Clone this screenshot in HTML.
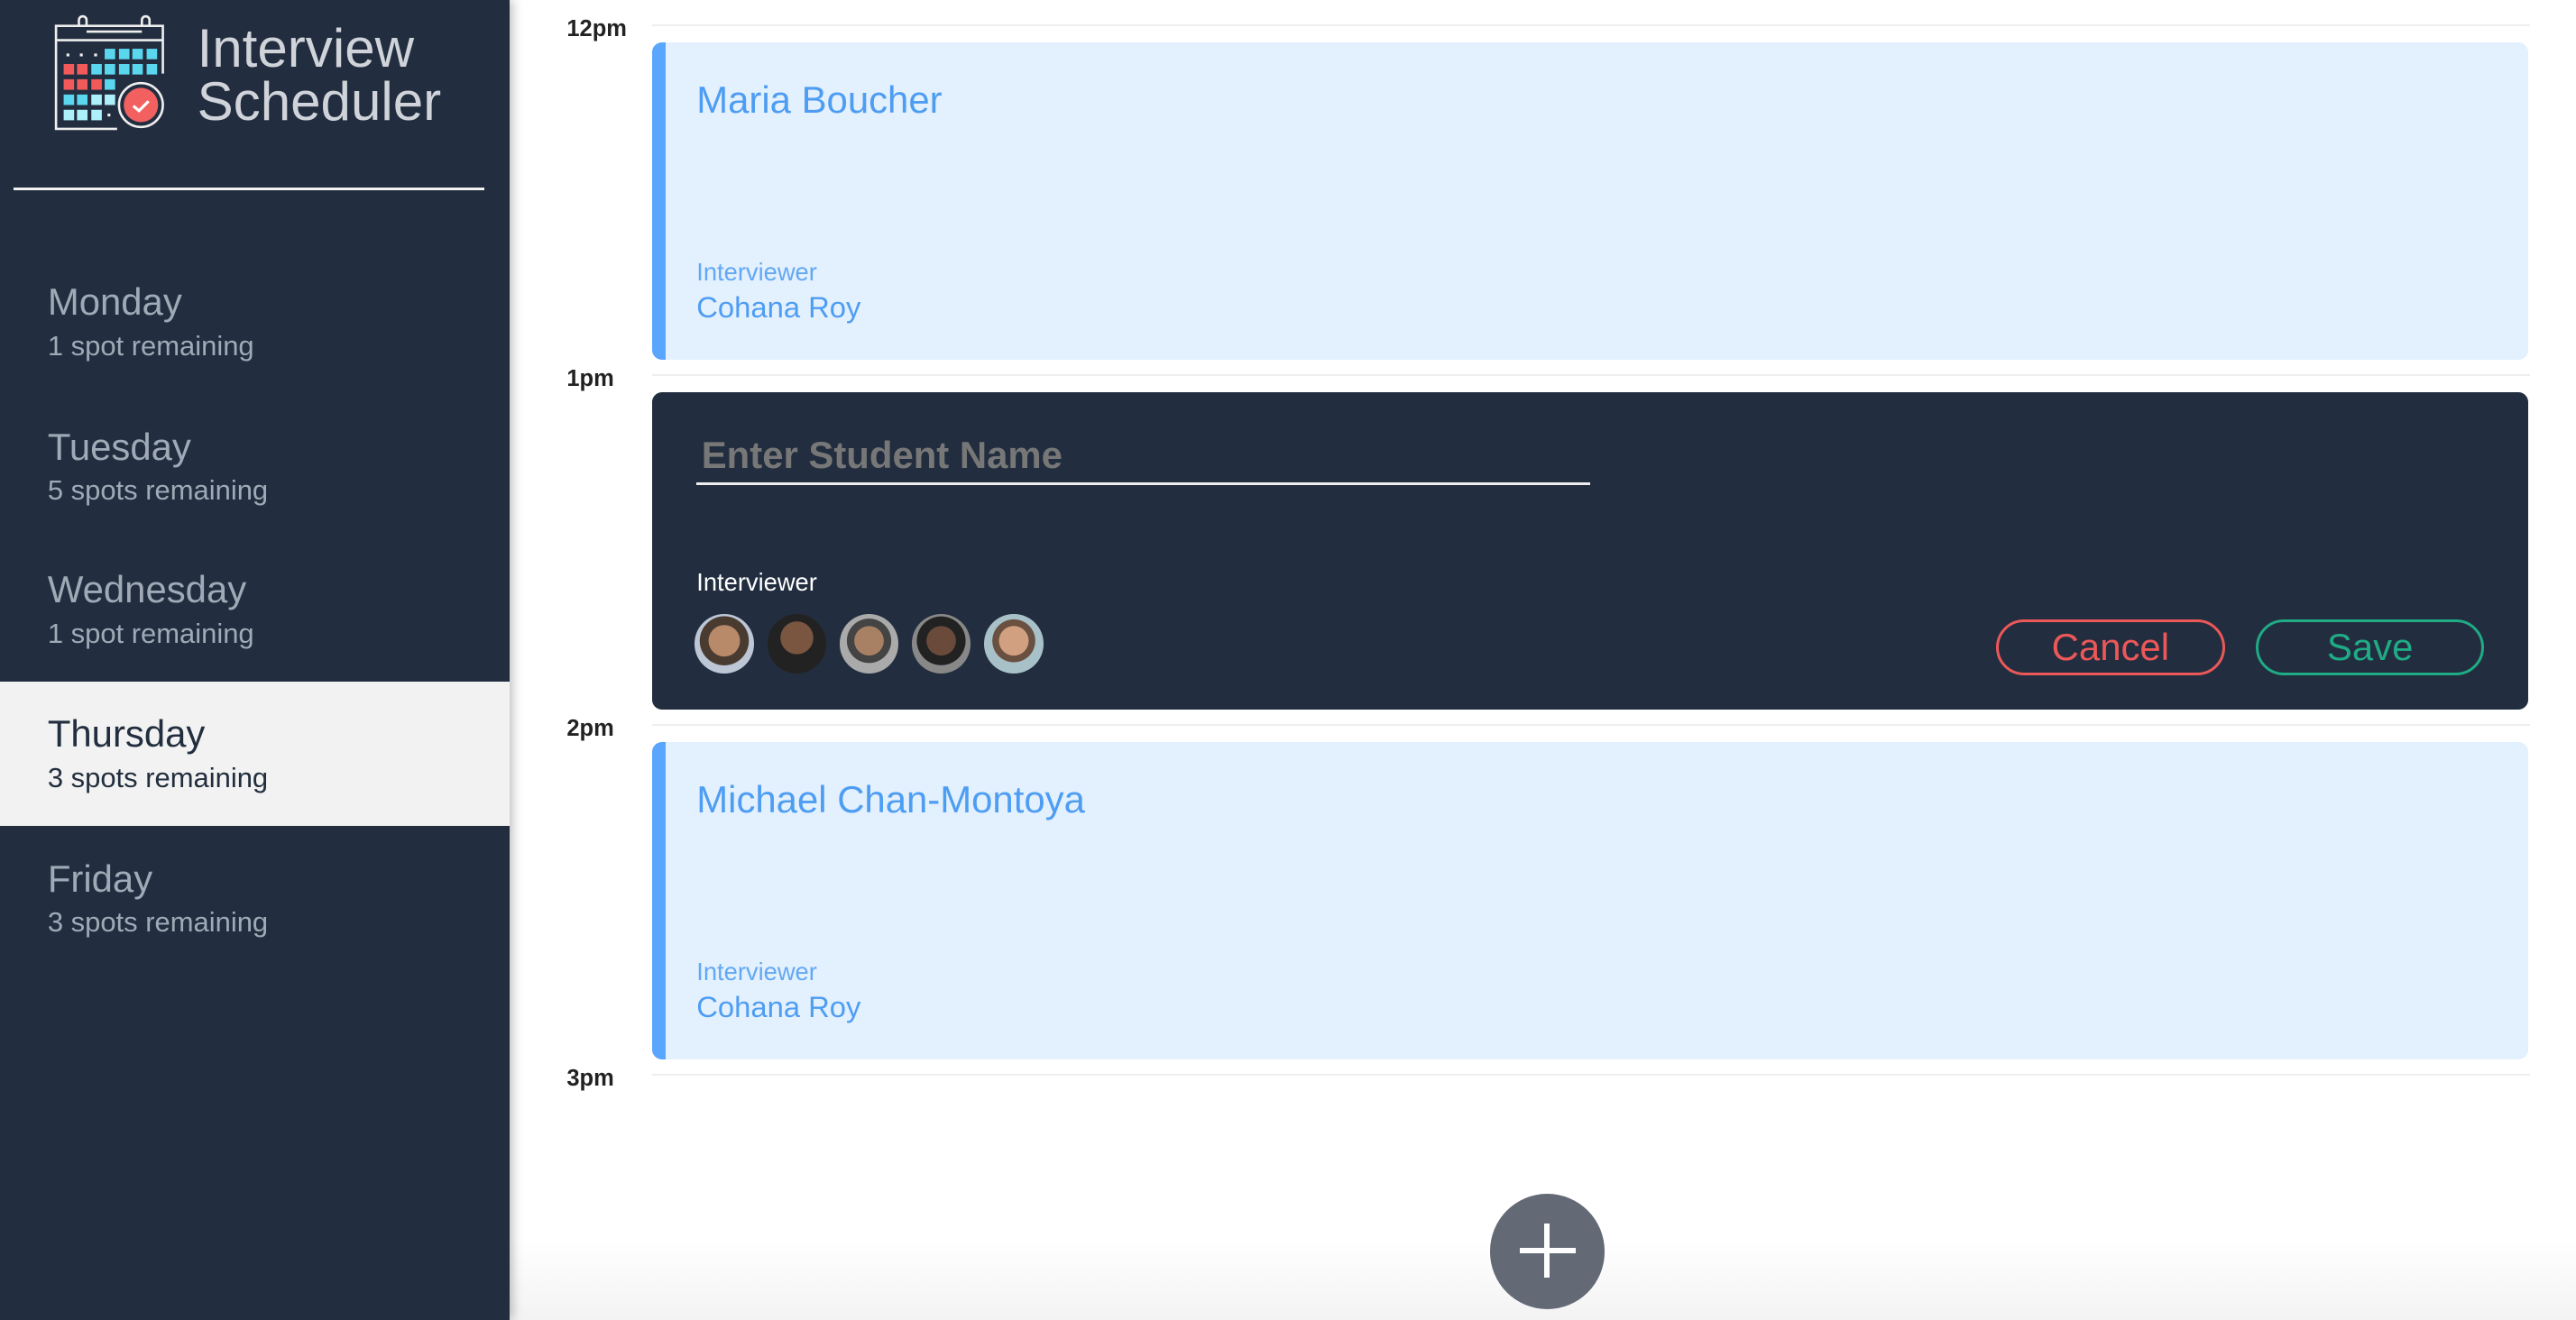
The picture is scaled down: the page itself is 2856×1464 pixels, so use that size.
<!DOCTYPE html>
<html><head><meta charset="utf-8"><style>
html,body{margin:0;padding:0;width:2856px;height:1464px;overflow:hidden;background:#fff}
#w{zoom:1.8214;width:1568px;height:804px;position:relative;font-family:"Liberation Sans",sans-serif;background:linear-gradient(#fff 0,#fff 755px,#f3f3f3 804px)}
.a{position:absolute;white-space:nowrap}
#side{position:absolute;left:0;top:0;width:310px;height:804px;background:#222e3f;box-shadow:2px 0 6px rgba(0,0,0,.25)}
.day{position:absolute;left:0;width:310px;height:88px}
.day .n{position:absolute;left:29px;top:19px;font-size:23px;color:#a0aab7}
.day .s{position:absolute;left:29px;top:49px;font-size:17px;color:#a0aab7;font-weight:300}
.day.sel{background:#f2f2f2}
.day.sel .n,.day.sel .s{color:#222e3f}
.t{position:absolute;left:345px;font-size:14px;font-weight:bold;color:#222}
.ln{position:absolute;left:397px;width:1143px;height:1px;background:#eee}
.card{position:absolute;left:397px;width:1142px;height:193px;background:#e3f0fd;border-radius:6px;overflow:hidden}
.card:before{content:"";position:absolute;left:0;top:0;bottom:0;width:8px;background:#5aa6fc}
.card .nm{position:absolute;left:27px;top:22px;font-size:23px;color:#4d9df3}
.card .iv{position:absolute;left:27px;top:131px;font-size:15px;color:#63a8f4}
.card .ir{position:absolute;left:27px;top:151px;font-size:18px;color:#4d9df3}
.av{position:absolute;top:374px;width:36px;height:36px;border-radius:50%}
.btn{position:absolute;top:377px;width:136px;height:31px;border-radius:18px;font-size:23px;text-align:center;line-height:31px}
</style></head><body><div id="w">
<div id="side">
<svg class="a" style="left:30px;top:9px" width="74" height="72" viewBox="50 18 118 124">
<g fill="none" stroke="#eee" stroke-width="2.5">
<path d="M116 138H52V30H164V80"/><path d="M52 45H164"/><path d="M76 30V24a4 4 0 0 1 8 0V30M142 30V24a4 4 0 0 1 8 0V30"/><path d="M84 36H142"/>
<circle cx="141" cy="113" r="23"/></g>
<circle cx="141" cy="113" r="18" fill="#f26060"/>
<path d="M133 114l6 5 10-10" fill="none" stroke="#fff" stroke-width="3"/>
<g fill="#eee"><rect x="63" y="59" width="3" height="3"/><rect x="77" y="59" width="3" height="3"/><rect x="92" y="59" width="3" height="3"/><rect x="106" y="122" width="3" height="3"/></g>
<g fill="#5ad6ef"><rect x="103" y="54" width="11" height="11"/><rect x="118" y="54" width="11" height="11"/><rect x="132" y="54" width="11" height="11"/><rect x="147" y="54" width="11" height="11"/>
<rect x="89" y="70" width="11" height="11"/><rect x="103" y="70" width="11" height="11"/><rect x="118" y="70" width="11" height="11"/><rect x="132" y="70" width="11" height="11"/><rect x="147" y="70" width="11" height="11"/>
<rect x="103" y="86" width="11" height="11"/><rect x="60" y="102" width="11" height="11"/><rect x="74" y="102" width="11" height="11"/></g>
<g fill="#f25a5a"><rect x="60" y="70" width="11" height="11"/><rect x="74" y="70" width="11" height="11"/><rect x="60" y="86" width="11" height="11"/><rect x="74" y="86" width="11" height="11"/><rect x="89" y="86" width="11" height="11"/></g>
<g fill="#aef0fa"><rect x="89" y="102" width="11" height="11"/><rect x="103" y="102" width="11" height="11"/><rect x="60" y="118" width="11" height="11"/><rect x="74" y="118" width="11" height="11"/><rect x="89" y="118" width="11" height="11"/></g>
</svg>
<div class="a" style="left:120px;top:14px;font-size:33px;line-height:32px;color:#d0d4da;font-weight:300">Interview<br>Scheduler</div>
<div class="a" style="left:8px;top:114px;width:287px;height:2px;background:#f2f2f2"></div>
<div class="day" style="top:152px"><div class="n">Monday</div><div class="s">1 spot remaining</div></div>
<div class="day" style="top:240px"><div class="n">Tuesday</div><div class="s">5 spots remaining</div></div>
<div class="day" style="top:327px"><div class="n">Wednesday</div><div class="s">1 spot remaining</div></div>
<div class="day sel" style="top:415px"><div class="n">Thursday</div><div class="s">3 spots remaining</div></div>
<div class="day" style="top:503px"><div class="n">Friday</div><div class="s">3 spots remaining</div></div>
</div>
<div class="ln" style="top:15px"></div><div class="t" style="top:10px">12pm</div>
<div class="ln" style="top:228px"></div><div class="t" style="top:223px">1pm</div>
<div class="ln" style="top:441px"></div><div class="t" style="top:436px">2pm</div>
<div class="ln" style="top:654px"></div><div class="t" style="top:649px">3pm</div>
<div class="card" style="top:26px"><div class="nm">Maria Boucher</div><div class="iv">Interviewer</div><div class="ir">Cohana Roy</div></div>
<div class="a" style="left:397px;top:239px;width:1142px;height:193px;background:#222e3f;border-radius:6px"></div>
<div class="a" style="left:427px;top:264px;font-size:23px;font-weight:bold;color:#777">Enter Student Name</div>
<div class="a" style="left:424px;top:294px;width:544px;height:1.5px;background:#eee"></div>
<div class="a" style="left:424px;top:346px;font-size:15px;color:#fff">Interviewer</div>
<div class="av" style="left:423px;background:radial-gradient(circle at 50% 45%,#b88a6a 0 35%,#4a3b30 36% 55%,#bcc6d4 56%)"></div>
<div class="av" style="left:467px;background:radial-gradient(circle at 50% 40%,#7a5540 0 35%,#222 36%)"></div>
<div class="av" style="left:511px;background:radial-gradient(circle at 50% 45%,#a88064 0 33%,#444 34% 50%,#aaa 51%)"></div>
<div class="av" style="left:555px;background:radial-gradient(circle at 50% 45%,#6a4a3a 0 33%,#222 34% 55%,#888 56%)"></div>
<div class="av" style="left:599px;background:radial-gradient(circle at 50% 45%,#d0a080 0 33%,#6a5040 34% 48%,#a8c0c8 49%)"></div>
<div class="btn" style="left:1215px;border:2px solid #ec5858;color:#ec5858">Cancel</div>
<div class="btn" style="left:1373px;border:2px solid #1fab85;color:#1fab85">Save</div>
<div class="card" style="top:452px"><div class="nm">Michael Chan-Montoya</div><div class="iv">Interviewer</div><div class="ir">Cohana Roy</div></div>
<div class="a" style="left:907px;top:727px;width:70px;height:70px;border-radius:50%;background:#636a76"></div>
<div class="a" style="left:925px;top:760px;width:34px;height:3px;background:#fff"></div>
<div class="a" style="left:940px;top:745px;width:3px;height:33px;background:#fff"></div>
</div></body></html>
